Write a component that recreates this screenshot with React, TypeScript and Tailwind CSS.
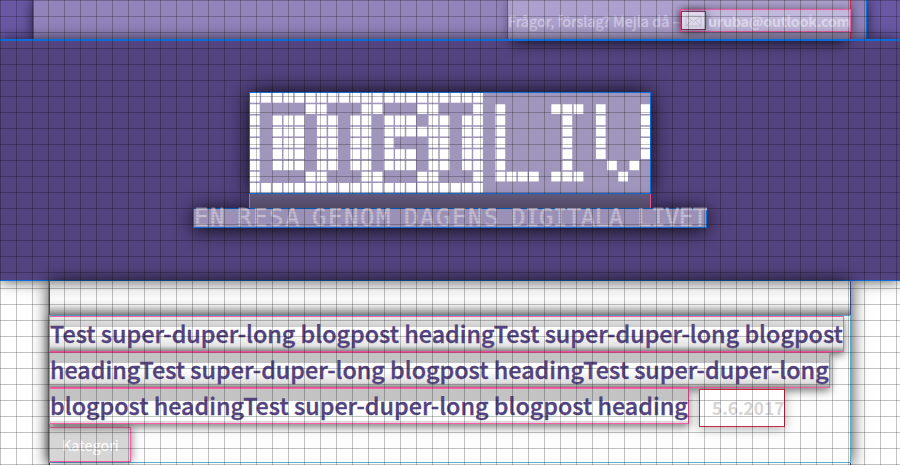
import React from "react";

const rows = [
  "#####################...............",
  "#....##...##...##...#.#....###.#...#",
  "#.###.##.##.###.##.##.#.....#..#...#",
  "#.###.##.##.######.##.#.....#..#...#",
  "#.###.##.##.#...##.##.#.....#..#...#",
  "#.###.##.##.###.##.##.#.....#..#...#",
  "#.###.##.##.###.##.##.#.....#...#.#.",
  "#....##...##...##...#.####.###...#..",
  "#####################...............",
];

const lines = [
  {
    text: "Test super-duper-long blogpost headingTest super-duper-long blogpost",
    box: "w-[795px] bg-[linear-gradient(to_bottom,#eaeaea_0,#cdcdcd_10px,#fff_10px,#fff_16px,#e2e2e2_29px,#888_35px)]",
  },
  {
    text: "headingTest super-duper-long blogpost headingTest super-duper-long",
    box: "w-[781px] bg-[linear-gradient(to_bottom,#c3c3c3_0,#c3c3c3_10px,#fff_10px,#fff_18px,#dedede_30px,#888_35px)]",
  },
  {
    text: "blogpost headingTest super-duper-long blogpost heading",
    box: "w-[640px] bg-[linear-gradient(to_bottom,#c3c3c3_0,#c3c3c3_11px,#fff_11px,#fff_32px,#dcdcdc_32px)]",
  },
];

function Line({ i }: { i: number }) {
  return (
    <span className={`block h-9 shrink-0 border border-[#ff5ba6] shadow-[0_3px_8px_rgba(0,0,0,0.5)] ${lines[i].box}`}>
      <span className="-mt-[3px] block whitespace-nowrap text-[23.35px] leading-[38px] font-medium text-[#53437f] [-webkit-text-stroke:0.35px_#53437f]">{lines[i].text}</span>
    </span>
  );
}

const words = [
  { text: "EN", cls: "w-[43px] tracking-[1.55px]" },
  { text: "RESA", cls: "w-[75px] tracking-[1.55px]" },
  { text: "GENOM", cls: "w-[92px] tracking-[1.55px]" },
  { text: "DAGENS", cls: "w-[107px] tracking-[1.55px]" },
  { text: "DIGITALA", cls: "w-[126px] tracking-[-0.5px]" },
  { text: "LIVET", cls: "w-[69px] tracking-[-0.5px]" },
];

export default function App() {
  return (
    <div className="relative h-[465px] w-[900px] overflow-hidden bg-white font-['Noto_Sans_CJK_SC','Noto_Sans',sans-serif]">
      <div className="flex h-[39px] bg-[#6a58a5]">
        <div className="ml-[33px] flex h-[39px] w-[834px] justify-end border-x border-[#0a6fdc] bg-[#9283bb] pr-[15px] shadow-[0_0_14px_rgba(0,0,0,0.7)]">
          <div className="flex h-[39px] w-[344px] border-x border-[#d22a4c] bg-[#ada0cd] pt-[9px] text-[14.45px] text-[#cfc8e2] shadow-[0_0_10px_rgba(0,0,0,0.3)]">
            <span className="w-[172px] shrink-0 whitespace-nowrap leading-[23px] [-webkit-text-stroke:0.3px_#cfc8e2]">Frågor, förslag? Mejla då –</span>
            <a className="-mr-px flex h-[23px] w-[171px] shrink-0 items-center border border-[#f35ca4] bg-[#c1b8dc] font-bold shadow-[0_0_10px_rgba(0,0,0,0.4)]">
              <svg className="h-[19px] w-[25px] shrink-0 border border-[#7b3566] bg-[#dedaeb] shadow-[0_0_8px_rgba(0,0,0,0.5)]" viewBox="0 0 23 17" fill="none" stroke="#c4bdd8">
                <rect x="4" y="4" width="15" height="10" />
                <path d="m4 4 7.5 6L19 4M4 14l5-5m5 0 5 5" />
              </svg>
              <span className="ml-[2px] tracking-[-0.3px] text-[#dcd7ea]">uruba@outlook.com</span>
            </a>
          </div>
        </div>
      </div>
      <header className="relative flex h-[242px] flex-col items-center border-t-2 border-b border-[#0a6fdc] bg-[#53437f] pt-[51px] shadow-[0_0_14px_rgba(0,0,0,0.7)]">
        <div className="absolute inset-x-0 top-0 h-6 overflow-hidden">
          <div className="absolute -top-5 left-[512px] h-5 w-[335px] shadow-[0_2px_14px_rgba(0,0,0,0.75)]" />
        </div>
        <div className="h-[102px] w-[402px] border border-[#0a6fdc] bg-[#a096bb] shadow-[0_0_20px_rgba(0,0,0,0.9)]">
          <svg className="h-full w-full" viewBox="0 0 400 100">
            {rows.map((r, y) =>
              [...r].map((c, x) => c === "#" && <rect key={`${x}-${y}`} x={x * 11.16} y={y * 11.25} width="9.7" height="9.7" fill="#fff" />),
            )}
          </svg>
        </div>
        <div className="relative z-10 h-[14px] w-[402px] border-x border-[#df578f] bg-gradient-to-b from-[#61587b] to-[#514965]" />
        <p className="relative flex h-5 w-[514px] overflow-visible border border-[#0a6fdc] bg-[#9b90b5] font-['DejaVu_Sans_Mono',monospace] text-[24px] leading-[19px] whitespace-nowrap text-[#c3bcd2] shadow-[0_2px_20px_rgba(0,0,0,0.9)] [-webkit-text-stroke:0.4px_#c3bcd2]">
          {words.map((w) => (
            <span key={w.text} className={`shrink-0 ${w.cls}`}>{w.text}</span>
          ))}
          <i className="absolute inset-0 bg-[repeating-linear-gradient(to_bottom,transparent_0,transparent_2px,rgba(155,144,181,0.45)_2px,rgba(155,144,181,0.45)_3px)]" />
        </p>
      </header>
      <main className="relative ml-[49px] h-[184px] w-[802px] border-x border-[#364c8e] shadow-[0_0_16px_rgba(0,0,0,0.8)]">
        <div className="h-[34px] bg-[linear-gradient(to_bottom,#a8a8a8,#eee_10px,#fafafa_18px,#eee_24px,#888)]" />
        <article className="-mx-px h-[148px] border border-[#58aecb] bg-[#fdfdfd]">
          <div className="-ml-px">
            <Line i={0} />
            <Line i={1} />
            <div className="flex gap-[10px] h-[39px]">
              <Line i={2} />
              <time className="mt-px h-[38px] w-[86px] shrink-0 border border-[#c82945] bg-white pl-3 text-[17.3px] leading-9 font-bold text-[#d5d5d5] shadow-[0_2px_10px_rgba(0,0,0,0.3)]">5.6.2017</time>
            </div>
            <div className="h-[35px] w-[82px] border border-[#ff5ba6] bg-[#d6d6d6] pl-3 text-[14.5px] leading-[33px] text-white shadow-[0_0_9px_rgba(0,0,0,0.5)]">Kategori</div>
          </div>
        </article>
      </main>
      <div className="pointer-events-none absolute inset-0 bg-[linear-gradient(to_right,rgba(0,0,0,0.24)_1px,transparent_1px),linear-gradient(to_bottom,rgba(0,0,0,0.24)_1px,transparent_1px)] bg-[size:16px_16px]" />
    </div>
  );
}
